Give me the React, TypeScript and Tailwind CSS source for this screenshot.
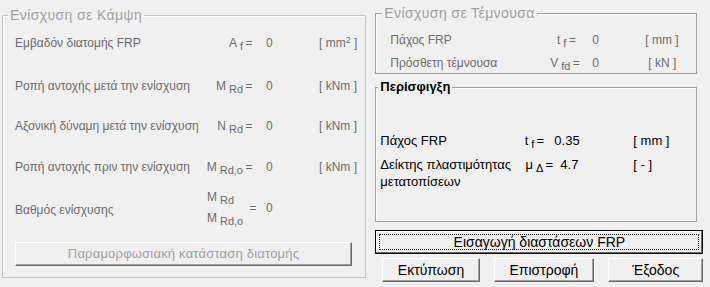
import React from "react";

const GRAY = "text-[#6d6d6d]";

function Sub({ children }: { children: React.ReactNode }) {
  return <span className="relative top-[3px] text-[11px] ml-[3px]">{children}</span>;
}

function ClassicButton({
  children,
  className = "",
  disabled = false,
}: {
  children: React.ReactNode;
  className?: string;
  disabled?: boolean;
}) {
  return (
    <div
      className={`flex items-center justify-center bg-[#f0f0f0] border-t border-l border-t-white border-l-white border-b border-r border-b-[#696969] border-r-[#696969] shadow-[inset_-1px_-1px_0_#a0a0a0] ${
        disabled ? "text-[#a0a0a0]" : "text-black"
      } ${className}`}
    >
      {children}
    </div>
  );
}

function LeftRow({
  label,
  sym,
  value,
  unit,
  className = "",
}: {
  label: React.ReactNode;
  sym: React.ReactNode;
  value: string;
  unit: React.ReactNode;
  className?: string;
}) {
  return (
    <div className={`flex items-center h-[20px] ${className}`}>
      <div className="w-[188px] whitespace-nowrap">{label}</div>
      <div className="w-[40px] text-right whitespace-nowrap">{sym}</div>
      <div className="w-[12px] text-center">=</div>
      <div className="w-[11px]" />
      <div className="w-[53px]">{value}</div>
      <div className="whitespace-nowrap">{unit}</div>
    </div>
  );
}

export default function App() {
  return (
    <div className="w-[710px] h-[287px] bg-[#f0f0f0] flex items-start pl-[2px] gap-[9px] font-['Liberation_Sans',Arial,sans-serif] text-[12px] overflow-hidden">
      {/* Left group */}
      <fieldset className="mt-[7px] w-[364px] h-[271px] border border-[#c4c4c4] shadow-[inset_1px_1px_0_#fff] pl-[12px] pr-[8px]">
        <legend className="ml-[-7px] px-[2px] text-[14px] leading-4 tracking-[0.4px] text-[#a0a0a0]">
          Ενίσχυση σε Κάμψη
        </legend>
        <div className={`flex flex-col ${GRAY}`}>
          <LeftRow
            className="mt-[10px]"
            label="Εμβαδόν διατομής FRP"
            sym={
              <>
                A<Sub>f</Sub>
              </>
            }
            value="0"
            unit={
              <>
                [ mm<sup className="text-[9px]">2</sup> ]
              </>
            }
          />
          <LeftRow
            className="mt-[23px]"
            label="Ροπή αντοχής μετά την ενίσχυση"
            sym={
              <>
                M<Sub>Rd</Sub>
              </>
            }
            value="0"
            unit="[ kNm ]"
          />
          <LeftRow
            className="mt-[20px]"
            label="Αξονική δύναμη μετά την ενίσχυση"
            sym={
              <>
                N<Sub>Rd</Sub>
              </>
            }
            value="0"
            unit="[ kNm ]"
          />
          <div className="flex items-center h-[20px] mt-[21px]">
            <div className="w-[186px] whitespace-nowrap">Ροπή αντοχής πριν την ενίσχυση</div>
            <div className="w-[42px] text-right whitespace-nowrap">
              M<Sub>Rd,o</Sub>
            </div>
            <div className="w-[12px] text-center">=</div>
            <div className="w-[11px]" />
            <div className="w-[53px]">0</div>
            <div>[ kNm ]</div>
          </div>
          <div className="flex items-center h-[42px] mt-[10px]">
            <div className="w-[192px] whitespace-nowrap pt-[4px]">Βαθμός ενίσχυσης</div>
            <div className="w-[40px] flex flex-col leading-[21px]">
              <div className="whitespace-nowrap">
                M<Sub>Rd</Sub>
              </div>
              <div className="whitespace-nowrap">
                M<Sub>Rd,o</Sub>
              </div>
            </div>
            <div className="w-[12px] text-center">=</div>
            <div className="w-[7px]" />
            <div>0</div>
          </div>
          <ClassicButton disabled className="mt-[13px] h-[24px] w-[337px] text-[13px] tracking-[0.2px]">
            Παραμορφωσιακή κατάσταση διατομής
          </ClassicButton>
        </div>
      </fieldset>

      {/* Right column */}
      <div className="mt-[5px] w-[328px] flex flex-col">
        <fieldset className="w-[322px] h-[69px] border border-[#a0a0a0] shadow-[inset_1px_1px_0_#fff] pl-[14px]">
          <legend className="ml-[-8px] px-[2px] text-[14px] leading-4 tracking-[0.4px] text-[#a0a0a0]">
            Ενίσχυση σε Τέμνουσα
          </legend>
          <div className={`flex flex-col ${GRAY}`}>
            <div className="flex items-center h-[18px] mt-[10px]">
              <div className="w-[146px] whitespace-nowrap">Πάχος FRP</div>
              <div className="w-[30px] text-right whitespace-nowrap">
                t<Sub>f</Sub>
              </div>
              <div className="w-[12px] text-center">=</div>
              <div className="w-[14px]" />
              <div className="w-[53px]">0</div>
              <div>[ mm ]</div>
            </div>
            <div className="flex items-center h-[18px] mt-[5px]">
              <div className="w-[146px] whitespace-nowrap">Πρόσθετη τέμνουσα</div>
              <div className="w-[34px] text-right whitespace-nowrap">
                V<Sub>fd</Sub>
              </div>
              <div className="w-[12px] text-center">=</div>
              <div className="w-[10px]" />
              <div className="w-[56px]">0</div>
              <div>[ kN ]</div>
            </div>
          </div>
        </fieldset>

        <fieldset className="mt-[5px] w-[322px] h-[143px] border border-[#a0a0a0] shadow-[inset_1px_1px_0_#fff] pl-[4px]">
          <legend className="ml-[-2px] px-[2px] text-[13px] leading-4 font-bold text-black">
            Περίσφιγξη
          </legend>
          <div className="flex flex-col text-[13px] text-black">
            <div className="flex items-center h-[18px] mt-[37px]">
              <div className="w-[135px] whitespace-nowrap">Πάχος FRP</div>
              <div className="w-[19px] text-right whitespace-nowrap">
                t<Sub>f</Sub>
              </div>
              <div className="w-[12px] text-center">=</div>
              <div className="w-[8px]" />
              <div className="w-[79px]">0.35</div>
              <div>[ mm ]</div>
            </div>
            <div className="flex items-start mt-[6px] leading-[17px]">
              <div className="w-[137px]">
                <div className="whitespace-nowrap">Δείκτης πλαστιμότητας</div>
                <div className="whitespace-nowrap">μετατοπίσεων</div>
              </div>
              <div className="w-[26px] text-right whitespace-nowrap">
                μ<Sub>Δ</Sub>
              </div>
              <div className="w-[12px] text-center">=</div>
              <div className="w-[5px]" />
              <div className="w-[73px]">4.7</div>
              <div>[ - ]</div>
            </div>
          </div>
        </fieldset>

        <div className="mt-[8px] h-[24px] w-[328px] flex border border-black bg-[#f0f0f0] shadow-[inset_-1px_-1px_0_#696969,inset_1px_1px_0_#fff]">
          <div className="flex-1 m-[3px] border border-dotted border-black flex items-center justify-center text-[14px] text-black">
            Εισαγωγή διαστάσεων FRP
          </div>
        </div>

        <div className="mt-[4px] flex pl-[7px] gap-[14px] text-[14px]">
          <ClassicButton className="w-[98px] h-[24px]">Εκτύπωση</ClassicButton>
          <ClassicButton className="w-[101px] h-[24px]">Επιστροφή</ClassicButton>
          <ClassicButton className="w-[96px] h-[24px]">Έξοδος</ClassicButton>
        </div>
      </div>
    </div>
  );
}
